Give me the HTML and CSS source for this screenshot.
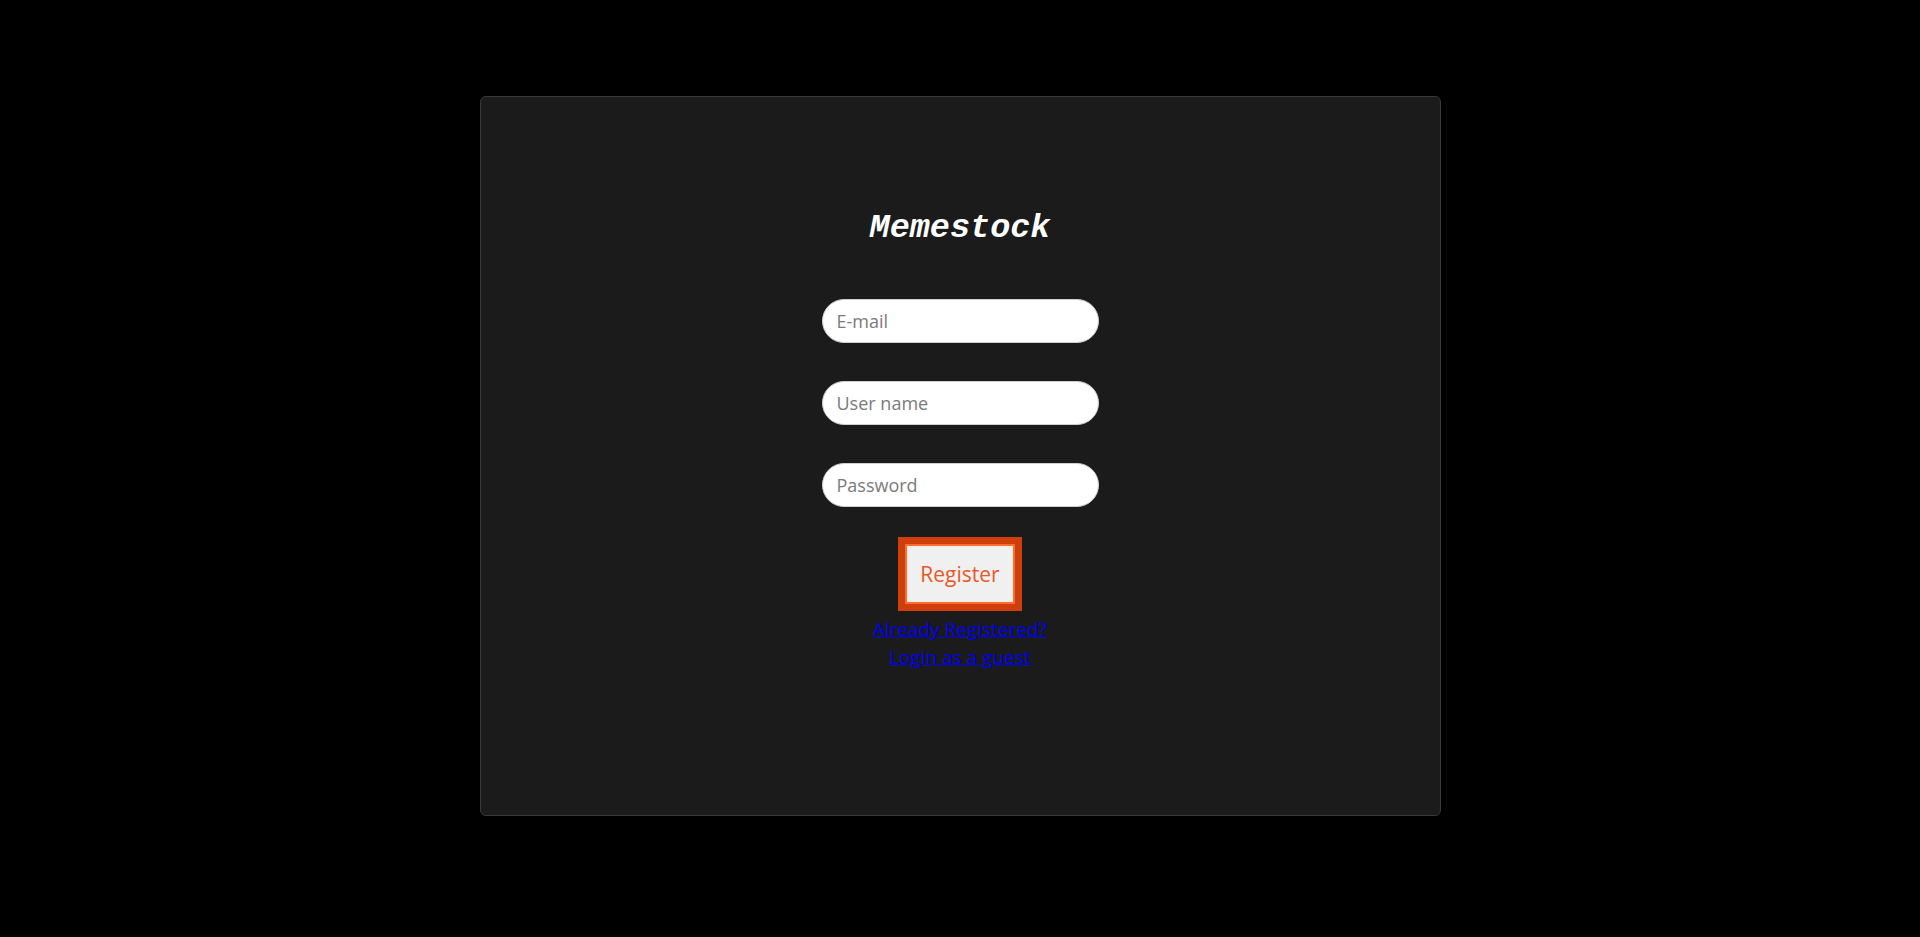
FILE: index.html
```html
<!DOCTYPE html>
<html lang="en">
<head>
<meta charset="utf-8">
<title>Memestock</title>
<link rel="stylesheet" href="styles.css">
</head>
<body>
<main class="card">
  <h1 class="brand">Memestock</h1>
  <form class="form">
    <input class="field" type="email" placeholder="E-mail">
    <input class="field" type="text" placeholder="User name">
    <input class="field" type="password" placeholder="Password">
    <button class="register" type="button">Register</button>
  </form>
  <div class="links">
    <a href="#" class="link">Already Registered?</a>
    <a href="#" class="link">Login as a guest</a>
  </div>
</main>
</body>
</html>
```
FILE: styles.css
```css
html, body {
  margin: 0;
  padding: 0;
  background: #000;
  height: 100%;
}
body {
  display: flex;
  justify-content: center;
  align-items: flex-start;
  font-family: "Open Sans", "Noto Sans", sans-serif;
}
.card {
  box-sizing: border-box;
  margin-top: 96px;
  width: 961px;
  height: 720px;
  background: #1b1b1b;
  border: 1px solid #3a3a3a;
  border-radius: 6px;
  padding-top: 113px;
  display: flex;
  flex-direction: column;
  align-items: center;
}
.brand {
  margin: 0;
  font-family: "Liberation Mono", "Courier New", monospace;
  font-style: italic;
  font-weight: bold;
  font-size: 33.5px;
  color: #fff;
  line-height: 36px;
}
.form {
  margin-top: 53px;
  display: flex;
  flex-direction: column;
  align-items: center;
  gap: 38px;
}
.field {
  box-sizing: border-box;
  width: 277px;
  height: 44px;
  border: 1px solid #cfcfcf;
  border-radius: 22px;
  background: #fff;
  padding: 0 14px;
  font-family: "Open Sans", "Noto Sans", sans-serif;
  font-size: 18px;
  color: #333;
  outline: none;
}
.field::placeholder {
  color: #7a7a7a;
}
.register {
  box-sizing: border-box;
  margin-top: -8px;
  width: 124px;
  height: 74px;
  background: #f0f0f0;
  border: 7px solid #cf3f0b;
  box-shadow: inset 0 0 0 2px #ff6a2e;
  color: #e8582b;
  font-family: "Open Sans", "Noto Sans", sans-serif;
  font-size: 21px;
  padding: 0;
  cursor: pointer;
}
.links {
  margin-top: 4px;
  display: flex;
  flex-direction: column;
  align-items: center;
}
.link {
  color: #0000ee;
  font-size: 19px;
  line-height: 28px;
}
```
